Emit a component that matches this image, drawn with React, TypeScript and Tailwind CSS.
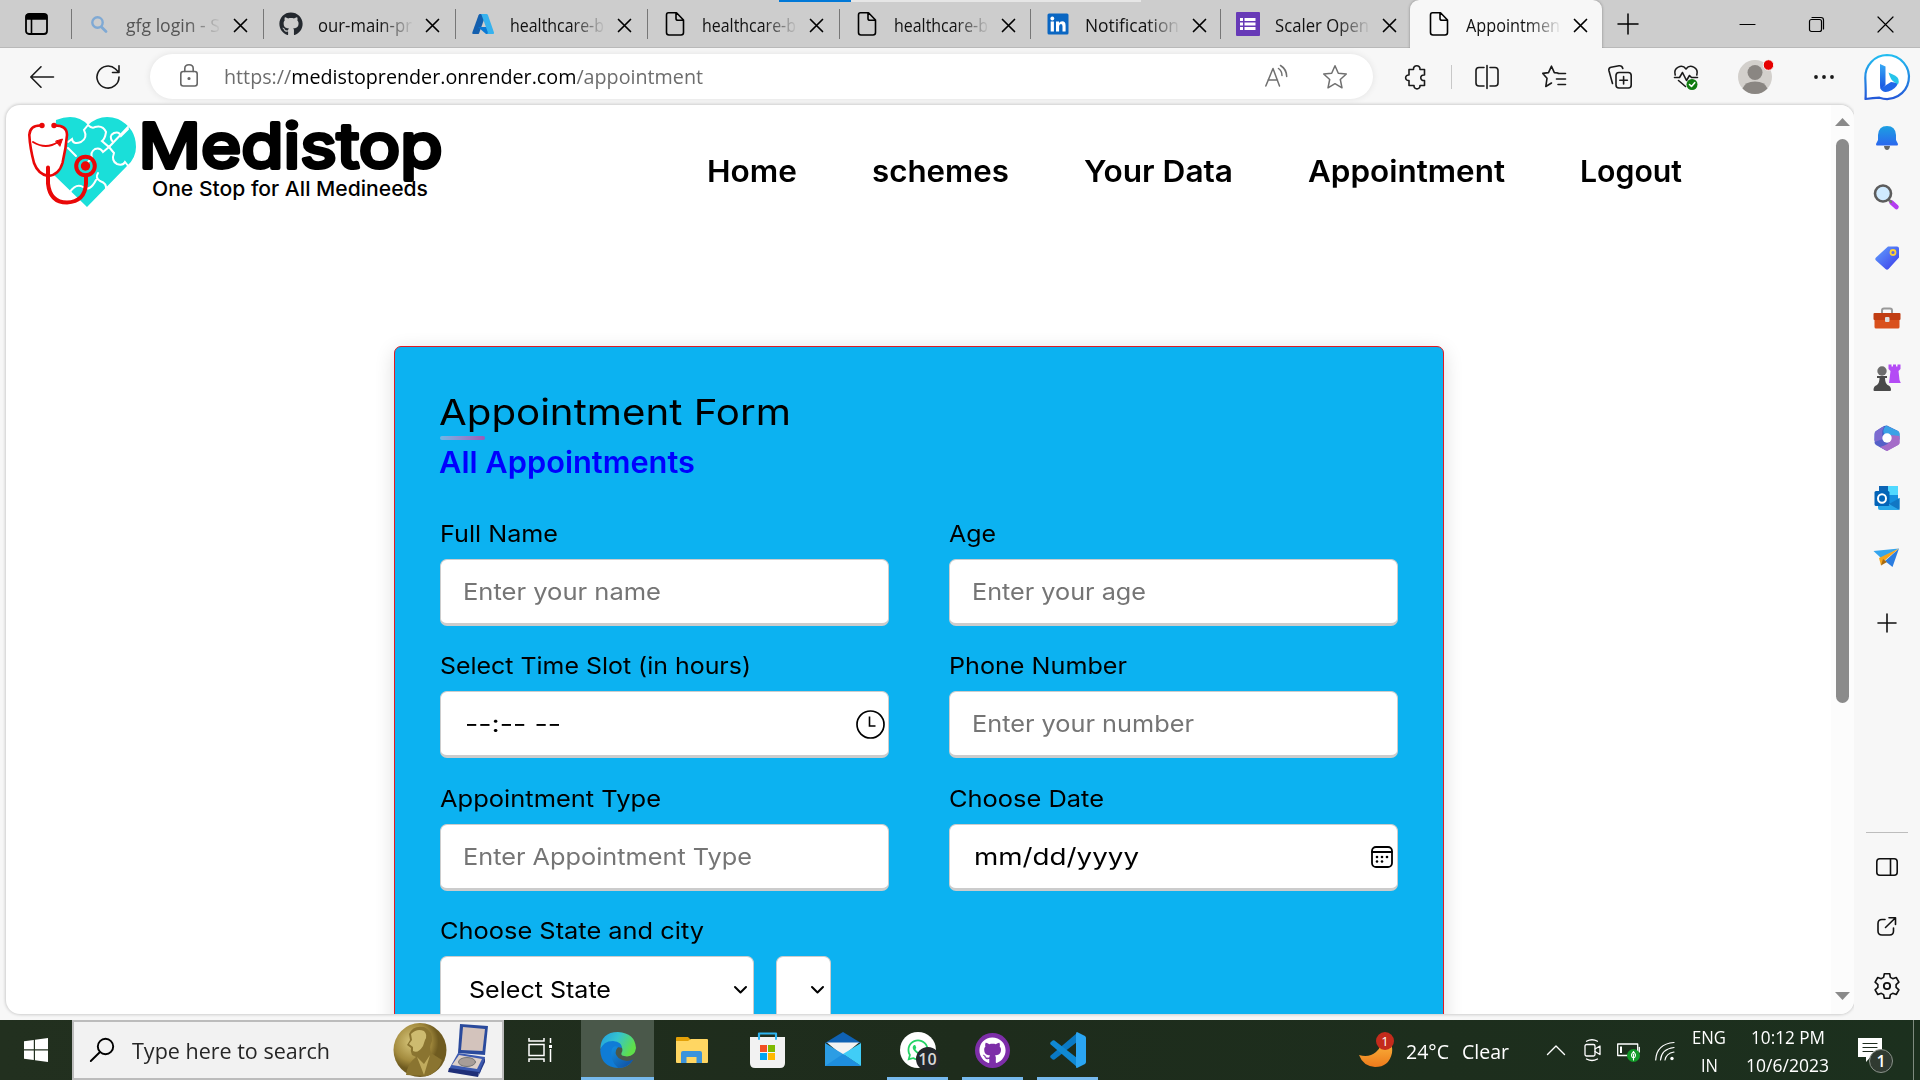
import { useLayoutEffect, useRef, type ReactNode } from "react";
import { FaGithub, FaWhatsapp } from "react-icons/fa";

const ui = "font-['Open_Sans','Noto_Sans',sans-serif]";
const geo = "font-['Inter','Liberation_Sans',sans-serif]";

/* A single line of text set to an exact measure. */
function Fit({ w, className = "", children }: { w: number; className?: string; children: ReactNode }) {
  const ref = useRef<HTMLSpanElement>(null);
  useLayoutEffect(() => {
    const el = ref.current;
    if (el && el.offsetWidth) {
      el.style.transform = `scaleX(${w / el.getBoundingClientRect().width})`;
    }
  }, [w]);
  return (
    <span className={`block shrink-0 whitespace-pre ${className}`} style={{ width: w }}>
      <span ref={ref} className="inline-block origin-left">
        {children}
      </span>
    </span>
  );
}

function Svg({ w, h, className = "", vb, children }: { w: number; h: number; className?: string; vb?: string; children: ReactNode }) {
  return (
    <svg width={w} height={h} viewBox={vb ?? `0 0 ${w} ${h}`} fill="none" stroke="currentColor" strokeWidth="1.6" strokeLinecap="round" strokeLinejoin="round" className={`block shrink-0 overflow-visible ${className}`}>
      {children}
    </svg>
  );
}

/* ---------- tab strip ---------- */

const PageIcon = () => (
  <Svg w={24} h={24}>
    <path d="M5.500 .8 H13.500 L20.500 8 V20.500 Q20.500 23 18 23 H6 Q3.500 23 3.500 20.500 V3 Q3.500 .8 5.500 .8 Z M13 1 V6.500 Q13 8.300 15 8.300 H20.500" />
  </Svg>
);
const SearchFav = () => (
  <Svg w={24} h={24} className="text-[#7fa9d4]">
    <circle cx="10.500" cy="10.500" r="5.200" strokeWidth="2.400" />
    <path d="M14.500 15 L19 19.500" strokeWidth="2.800" />
  </Svg>
);
const AzureIcon = () => (
  <Svg w={24} h={24}>
    <g stroke="none">
      <path d="M9 2 H15 L8 21.500 Q7.600 22 6.500 22 H2.500 Q.8 22 1.300 20.500 L7.500 3.200 Q8 2 9 2Z" fill="#135fae" />
      <path d="M7 15 H17 L18.500 22 H15 Z" fill="#0a78d4" />
      <path d="M9.500 2 H15.500 Q16.600 2 17 3.200 L23 20.500 Q23.300 22 22 22 H16 Q17.300 21.500 16.700 20 L10.700 3.200 Q10.300 2 9.500 2Z" fill="#36b2ee" />
    </g>
  </Svg>
);
const LinkedIn = () => (
  <Svg w={24} h={24}>
    <g stroke="none">
      <rect x="1.500" y="1.500" width="21" height="21" rx="1.500" fill="#0a66c2" />
      <g fill="#fff">
        <circle cx="6.300" cy="6.500" r="1.900" />
        <rect x="4.700" y="9.500" width="3.200" height="10" />
        <path d="M10 9.500 H13 V11 Q14 9.300 16.200 9.300 Q19.600 9.300 19.600 13.500 V19.500 H16.500 V14.300 Q16.500 12 14.900 12 Q13.100 12 13.100 14.500 V19.500 H10Z" />
      </g>
    </g>
  </Svg>
);
const FormsIcon = () => (
  <Svg w={24} h={24}>
    <g stroke="none">
      <rect width="24" height="24" rx="1" fill="#673ab7" />
      <g fill="#fff">
        <rect x="4" y="6" width="3" height="3" /><rect x="8.500" y="6" width="11" height="3" />
        <rect x="4" y="10.500" width="3" height="3" /><rect x="8.500" y="10.500" width="11" height="3" />
        <rect x="4" y="15" width="3" height="3" /><rect x="8.500" y="15" width="11" height="3" />
      </g>
    </g>
  </Svg>
);

const tabs: { icon: ReactNode; text: string; dim?: boolean; w: number }[] = [
  { icon: <SearchFav />, text: "gfg login - S", dim: true, w: 192 },
  { icon: <FaGithub size={24} color="#24292f" />, text: "our-main-pr", w: 192 },
  { icon: <AzureIcon />, text: "healthcare-b", w: 192 },
  { icon: <PageIcon />, text: "healthcare-b", w: 192 },
  { icon: <PageIcon />, text: "healthcare-b", w: 191 },
  { icon: <LinkedIn />, text: "Notification", w: 190 },
  { icon: <FormsIcon />, text: "Scaler Open", w: 190 },
];

const Cross = () => (
  <Svg w={13} h={13}>
    <path d="M.5 .5 L12.500 12.500 M12.500 .5 L.5 12.500" strokeWidth="1.700" />
  </Svg>
);

function TabBody({ icon, text, dim }: { icon: ReactNode; text: string; dim?: boolean }) {
  return (
    <>
      <span className="w-6 shrink-0">{icon}</span>
      <div className="ml-[15px] [mask-image:linear-gradient(to_right,#000_65%,transparent_102%)]">
        <Fit w={94} className={`text-[18.500px] leading-[47px] ${dim ? "text-[#555]" : "text-[#111]"}`}>{text}</Fit>
      </div>
      <span className="ml-[14px] mt-[2px]"><Cross /></span>
    </>
  );
}

function TabStrip() {
  return (
    <div className="relative flex h-12 items-center bg-[#cdcdcd] shadow-[inset_0_-1px_0_#b9b9b9]">
      <div className="ml-[25px] mr-[23px]">
        <Svg w={23} h={22}>
          <rect x="1" y="1" width="21" height="20" rx="3" strokeWidth="1.800" />
          <path d="M1.500 2 H21.500 V6 H1.500Z" fill="#000" />
          <path d="M6.500 6 V21" />
        </Svg>
      </div>
      {tabs.map((t, i) => (
        <div key={i} className="flex h-12 items-center" style={{ width: t.w }}>
          <div className="mr-[15px] h-[30px] w-px shrink-0 bg-[#777]" />
          <TabBody {...t} />
        </div>
      ))}
      <div className="relative z-10 flex h-12 w-[192px] items-center rounded-t-[9px] bg-[#f7f7f7] pl-[17px] shadow-[0_0_3px_rgba(0,0,0,.35)] [clip-path:inset(-4px_-4px_0_-4px)]">
        <TabBody icon={<PageIcon />} text="Appointmen" />
      </div>
      <div className="ml-[16px] flex items-center">
        <Svg w={20} h={20}><path d="M10 0 V20 M0 10 H20" strokeWidth="1.500" /></Svg>
      </div>
      <div className="ml-auto flex items-center pr-[27px]">
        <Svg w={15} h={15}><path d="M0 7.500 H15" strokeWidth="1.200" /></Svg>
        <Svg w={15} h={15} className="ml-[54px]">
          <rect x=".5" y="2.500" width="12" height="12" rx="2" strokeWidth="1.200" />
          <path d="M3 .5 H12 Q14.500 .5 14.500 3 V12" strokeWidth="1.200" />
        </Svg>
        <Svg w={15} h={15} className="ml-[54px]"><path d="M0 0 L15 15 M15 0 L0 15" strokeWidth="1.200" /></Svg>
      </div>
      <div className="absolute left-[779px] top-0 z-20 flex h-[2px] w-[362px] bg-[#e6e6e6]">
        <div className="h-full w-[72px] bg-[#0078d7]" />
      </div>
    </div>
  );
}

/* ---------- address bar ---------- */

function Toolbar() {
  return (
    <div className="flex h-[57px] items-center bg-[#f7f7f7] text-[#1a1a1a]">
      <Svg w={24} h={22} className="ml-[30px]"><path d="M23.500 11 H1 M11 .8 L.8 11 L11 21.200" /></Svg>
      <Svg w={24} h={24} className="ml-[42px]">
        <path d="M23 12 A11 11 0 1 1 19.500 4 L23 7.500 M23 .8 V7.500 H16.500" />
      </Svg>
      <div className="ml-[30px] flex h-[45px] w-[1223px] items-center rounded-full bg-white pl-[30px] shadow-[0_0_7px_rgba(0,0,0,.09)]">
        <Svg w={18} h={23} className="mb-[2px] text-[#666]">
          <rect x=".8" y="7.500" width="16.400" height="14.500" rx="2.500" />
          <path d="M4.800 7.500 V4.500 Q4.800 .8 9 .8 Q13.200 .8 13.200 4.500 V7.500" />
          <circle cx="9" cy="14.500" r=".8" fill="#666" />
        </Svg>
        <Fit w={479} className="ml-[26px] mt-[1px] text-[19.500px] leading-[44px] text-[#6d6d6d]">
          https://<span className="text-black">medistoprender.onrender.com</span>/appointment
        </Fit>
        <Svg w={23} h={22} className="ml-[562px] mb-[2px] text-[#707070]">
          <path d="M.8 21 L8 3.500 L14.500 21 M3 15 H12.500 M13.500 3.500 Q17 6 17 10.500 M15.500 .5 Q21.500 4 21.700 11.500" strokeWidth="1.500" />
        </Svg>
        <Svg w={24} h={24} className="ml-[35px] text-[#707070]">
          <path d="M12 .8 L15.300 8.200 L23.300 9 L17.300 14.500 L19 22.800 L12 18.700 L5 22.800 L6.700 14.500 L.7 9 L8.700 8.200Z" strokeWidth="1.500" />
        </Svg>
      </div>
      <Svg w={23} h={24} className="ml-[32px]">
        <path d="M4 4.500 H8.500 C8 -.5 15.500 -.5 15 4.500 H19.500 V10 C14.500 9.500 14.500 16 19.500 15.500 V20.500 H15 C15.500 25 8.500 25 9 20.500 H4 V15.500 C-.5 16 -.5 9.500 4 10 Z" />
      </Svg>
      <div className="ml-[23px] h-6 w-px bg-[#c8c8c8]" />
      <Svg w={24} h={24} className="ml-[23px]">
        <path d="M9 2.500 H4 Q1 2.500 1 5.500 V18 Q1 21 4 21 H9 M15 2.500 H20 Q23 2.500 23 5.500 V18 Q23 21 20 21 H15 M12 .5 V23.500" />
      </Svg>
      <Svg w={24} h={24} className="ml-[43px]">
        <path d="M16 8 L12.300 7.600 L9.500 1.200 L6.500 7.600 L.8 8.400 L5 13.300 L3.800 21.500 L9.500 18 M16 8.500 H23.500 M14.500 14 H23.500 M16 19.500 H23.500" />
      </Svg>
      <Svg w={24} h={24} className="ml-[42px]">
        <rect x="8" y="7.500" width="15.200" height="15.500" rx="3" />
        <path d="M15.600 11.500 V19 M11.800 15.200 H19.400 M4.500 18.500 L.9 5.500 Q.4 3 3 2.300 L11 .8 Q14 .5 14.800 3.500" />
      </Svg>
      <Svg w={24} h={24} className="ml-[42px]">
        <path d="M1.200 10 C-1 2.500 8 -1.500 12 4 C16 -1.500 25 2.500 22.800 10 M.5 12.500 H5.500 L8.500 7.500 L12.500 15.500 L15.500 10.500 L17.500 12.500 H23.500 M4.500 15.500 L11.500 21.500" />
        <circle cx="18" cy="19.500" r="5.500" fill="#107c10" stroke="none" />
        <path d="M15.500 19.500 L17.500 21.500 L20.700 17.700" stroke="#fff" />
      </Svg>
      <Svg w={34} h={34} className="ml-[40px]">
        <g stroke="none">
          <circle cx="17" cy="17" r="17" fill="#d3d0cc" />
          <circle cx="17" cy="12.500" r="7.500" fill="#8a8682" />
          <path d="M4.500 28.500 Q7 21.500 17 21.500 Q27 21.500 29.500 28.500 Q24 34 17 34 Q10 34 4.500 28.500Z" fill="#8a8682" />
          <circle cx="30.500" cy="5" r="5.300" fill="#e60000" stroke="#f7f7f7" strokeWidth="1" />
        </g>
      </Svg>
      <Svg w={20} h={6} className="ml-[42px]">
        <g fill="#1a1a1a" stroke="none"><circle cx="2" cy="3" r="1.900" /><circle cx="10" cy="3" r="1.900" /><circle cx="18" cy="3" r="1.900" /></g>
      </Svg>
      <Svg w={46} h={46} className="ml-[30px]">
        <defs>
          <linearGradient id="bingRing" x1="0" y1="0" x2="0" y2="1"><stop stopColor="#22bdf0" /><stop offset="1" stopColor="#2458d8" /></linearGradient>
          <linearGradient id="bingB" x1="0" y1="0" x2="0" y2="1"><stop stopColor="#35a9f5" /><stop offset="1" stopColor="#1750e0" /></linearGradient>
        </defs>
        <path d="M23 1 A22 22 0 1 1 15.500 43.700 Q9 44 1.500 45 Q2 40 1.300 24 A22 22 0 0 1 23 1Z" fill="#fff" stroke="url(#bingRing)" strokeWidth="2.200" />
        <path d="M16 10 L21.500 12.500 V31 L17 35.500 Q16 34.500 16 31Z" fill="url(#bingB)" stroke="none" />
        <path d="M16.500 34.500 L27 28 L34 29 Q32 35 24.500 37.500 Q18.500 39 16.500 34.500Z" fill="#1f66e8" stroke="none" />
        <path d="M24.500 18.500 L31 21.500 Q36.500 24.500 34 30.500 L29.500 27.500 Q27 26.500 24.500 18.500Z" fill="#25c4ea" stroke="none" />
      </Svg>
    </div>
  );
}

/* ---------- page ---------- */

function Logo() {
  return (
    <svg width="420" height="100" viewBox="28 110 420 100" className="block shrink-0 overflow-visible" fill="none">
      <path d="M87 207 L53 174 Q45 160 54 148 L56 120 Q76 112 88 125 Q101 113 118 119 Q136 128 136 147 Q136 158 127 166 Z" fill="#1adfd9" />
      <g stroke="#fff" strokeWidth="2" strokeLinecap="round">
        <path d="M88 125 L84 130 Q88 138 81 142 Q73 145 72 139 L68 142 M88 125 Q92 129 95 127 Q103 125 106 132 Q105 139 102 141 L109 147 L128 127" />
        <path d="M109 147 L114 153 Q111 161 117 164 Q123 166 125 162 L129 167 M113 142 Q108 136 114 133 Q119 131 121 136 L128 129" />
        <path d="M109 147 L103 152 Q100 147 95 149 Q90 152 92 158 L86 164 M68 148 L76 156 M98 173 Q95 178 100 181 Q107 183 106 190 L104 196 L108 198 M96 180 Q90 192 83 187 Q76 183 70 192 L66 198" />
      </g>
      <g stroke="#e90808" strokeLinecap="round" strokeLinejoin="round">
        <path d="M41 125.500 Q30 125 29.300 135 Q30 148 34 163 Q38 174 48 176 Q59 175 62.500 163 Q66 148 67 135 Q67 125 54 125.500" fill="#fff" strokeWidth="2.600" />
        <path d="M48 177 V193 Q50 212 67 212 Q85 211 86 193 V185" transform="translate(0 -9.500)" strokeWidth="4" />
        <path d="M33 142 Q46 150 58 142" strokeWidth="2" />
        <path d="M56 141 L62.500 139 L60 146Z" fill="#e90808" strokeWidth="1" />
        <circle cx="85.500" cy="166" r="9.300" strokeWidth="4" />
      </g>
      <g fill="#e90808"><circle cx="42" cy="125.500" r="2.700" /><circle cx="54" cy="125.500" r="2.700" /><circle cx="85.500" cy="166" r="4.700" /></g>
      <text x="138.500" y="167.500" textLength="304" lengthAdjust="spacingAndGlyphs" fontFamily="Inter, sans-serif" fontSize="62.500" fontWeight="400" fill="#000" stroke="#000" strokeWidth="4" strokeLinejoin="round">Medistop</text>
      <text x="152" y="196" textLength="276" lengthAdjust="spacingAndGlyphs" fontFamily="Inter, sans-serif" fontSize="20.500" fontWeight="450" fill="#000">One Stop for All Medineeds</text>
    </svg>
  );
}

const nav: [string, number][] = [["Home", 90], ["schemes", 137], ["Your Data", 149], ["Appointment", 197], ["Logout", 102]];

function Field({ label, lw, children }: { label: string; lw: number; children: ReactNode }) {
  return (
    <div className="h-[132.400px]">
      <Fit w={lw} className="mb-[7px] pt-[1px] text-[23.500px] leading-9 text-black">{label}</Fit>
      {children}
    </div>
  );
}

const box = "flex h-[67px] items-center rounded-[7px] border border-b-[3px] border-[#ccc] bg-white";

function Input({ text, w, dark, icon }: { text: string; w: number; dark?: boolean; icon?: ReactNode }) {
  return (
    <div className={`${box} w-[449px] justify-between pl-[22px] pr-[3px]`}>
      <Fit w={w} className={`pt-[1px] text-[23.500px] leading-9 ${dark ? "ml-[2px] text-black" : "text-[#757575]"}`}>{text}</Fit>
      {icon}
    </div>
  );
}

const Clock = () => (
  <Svg w={29} h={29} className="mt-[2px]"><circle cx="14.500" cy="14.500" r="13.500" strokeWidth="1.700" /><path d="M13.500 6.500 V16 H19.500" strokeLinecap="butt" strokeLinejoin="miter" /></Svg>
);
const Calendar = () => (
  <Svg w={22} h={22} className="mr-[1px] mt-[2px]">
    <rect x="1" y="1" width="20" height="20" rx="4" strokeWidth="1.800" /><path d="M1 6 H21" strokeWidth="1.800" />
    <g fill="#000" stroke="none"><circle cx="6" cy="11" r="1.300" /><circle cx="11" cy="11" r="1.300" /><circle cx="16" cy="11" r="1.300" /><circle cx="6" cy="15.500" r="1.300" /><circle cx="11" cy="15.500" r="1.300" /></g>
  </Svg>
);
const Chevron = () => (
  <Svg w={13} h={8} className="mr-[6px] mt-[3px]"><path d="M1 1 L6.500 6.500 L12 1" strokeWidth="2" /></Svg>
);

function Page() {
  return (
    <div className={`ml-[6px] flex h-[909px] w-[1848px] overflow-hidden rounded-[14px] bg-white shadow-[0_0_3px_1px_rgba(0,0,0,.17)] ${geo}`}>
      <div className="w-[1825px]">
        <header className="flex h-[130px]">
          <div className="ml-[22px] mt-[5px]"><Logo /></div>
          <nav className="ml-[259px] flex gap-[75px] text-[30px] leading-[133px] font-semibold text-black">
            {nav.map(([t, w]) => <Fit key={t} w={w}>{t}</Fit>)}
          </nav>
        </header>
        <form className="ml-[388px] mt-[111px] h-[740px] w-[1050px] rounded-[7px] border border-[#e01b24] bg-[#0cb2f1] pl-[45px] pt-[38px] shadow-[0_5px_20px_rgba(0,0,0,.14)]">
          <div className="relative">
            <Fit w={352} className="-ml-px text-[36px] leading-[54px] text-black">Appointment Form</Fit>
            <div className="absolute bottom-[-1px] left-0 h-1 w-[45px] rounded-full bg-linear-to-r from-[#71b7e6] to-[#9b59b6]" />
          </div>
          <Fit w={256} className="-ml-px mt-[2px] text-[30px] leading-[43px] font-semibold text-[#0000ff]">All Appointments</Fit>
          <div className="mt-[31px] grid grid-cols-[449px_449px] gap-x-[60px]">
            <Field label="Full Name" lw={118}><Input text="Enter your name" w={198} /></Field>
            <Field label="Age" lw={47}><Input text="Enter your age" w={174} /></Field>
            <Field label="Select Time Slot (in hours)" lw={311}><Input text="--:-- --" w={96} dark icon={<Clock />} /></Field>
            <Field label="Phone Number" lw={178}><Input text="Enter your number" w={222} /></Field>
            <Field label="Appointment Type" lw={221}><Input text="Enter Appointment Type" w={289} /></Field>
            <Field label="Choose Date" lw={155}><Input text="mm/dd/yyyy" w={165} dark icon={<Calendar />} /></Field>
            <Field label="Choose State and city" lw={264}>
              <div className="flex gap-[22px]">
                <div className={`${box} w-[314px] justify-between pl-[28px]`}>
                  <Fit w={142} className="pt-[2px] text-[23.500px] leading-9 text-black">Select State</Fit>
                  <Chevron />
                </div>
                <div className={`${box} w-[55px] justify-end`}><Chevron /></div>
              </div>
            </Field>
          </div>
        </form>
      </div>
      <div className="flex flex-1 flex-col items-center bg-[#fcfcfc] pb-[14px] pt-[13px] text-[#8a8a8a]">
        <Svg w={15} h={8}><path d="M0 8 L7.500 0 L15 8Z" fill="#8a8a8a" stroke="none" /></Svg>
        <div className="mt-[13px] h-[564px] w-[13px] rounded-full bg-[#8b8b8b]" />
        <Svg w={15} h={8} className="mt-auto"><path d="M0 0 L7.500 8 L15 0Z" fill="#8a8a8a" stroke="none" /></Svg>
      </div>
    </div>
  );
}

/* ---------- Edge sidebar ---------- */

const apps: ReactNode[] = [
  <g stroke="none">
    <path d="M11 22 H17 Q16.500 26 14 26 Q11.500 26 11 22Z" fill="#666" />
    <path d="M14 2 Q22.500 2 23 11 V16 L25 20 Q25 21.500 24 21.500 H4 Q3 21.500 3 20 L5 16 V11 Q5.500 2 14 2Z" fill="url(#bell)" />
  </g>,
  <g>
    <path d="M18.500 18.500 L23.500 23" stroke="#b43cf0" strokeWidth="4.500" />
    <path d="M15.500 15.500 L18 18" stroke="#777" strokeWidth="2.500" />
    <circle cx="10" cy="9.500" r="8" fill="#cfeaff" stroke="#5c5c5c" strokeWidth="2.600" />
  </g>,
  <g stroke="none">
    <path d="M15 2.500 H24 Q26 2.500 26 4.500 V13.500 L15.500 25 Q14 26.500 12.500 25 L3 16.500 Q1.500 15 3 13.500Z" fill="url(#tag)" />
    <circle cx="20" cy="8.500" r="2.500" fill="#5d68e8" stroke="#ffd233" strokeWidth="1.800" />
  </g>,
  <g stroke="none">
    <path d="M9 10 V6.500 Q9 4.500 11 4.500 H17 Q19 4.500 19 6.500 V10" stroke="#999" strokeWidth="2" fill="none" />
    <rect x="1.500" y="14" width="25" height="10.500" rx="1.500" fill="#d9501c" />
    <rect x=".5" y="9" width="27" height="7" rx="1" fill="#c13d12" />
    <rect x="12" y="13" width="4.500" height="5" rx="1" fill="#ddd" />
  </g>,
  <g stroke="none" transform="translate(0 -1)">
    <circle cx="9" cy="8" r="4.700" fill="#6d6d6d" />
    <path d="M4 13 H14 V15 H12 Q12 20 14.500 22 Q18 23 18 27 Q18 28 17 28 H1.500 Q.5 28 .5 27 Q.5 23 4 22 Q6.500 20 6.500 15 H4Z" fill="#4a4a4a" />
    <path d="M15.500 1.500 H18.500 V3.500 H20 V1.500 H23 V3.500 H24.500 V1.500 H27.500 V6 L25.500 8 L26.500 17 L27.800 20 H16 L17.500 8 L15.500 6Z" fill="#b44bf5" />
  </g>,
  <g stroke="none">
    <path d="M14 1.500 L25 7 Q26.500 8 26.500 10 V15 L18 11 Q14 8 11 12 L9 19 L3 19.500 Q1.500 18 1.500 16 V10 Q1.500 8 3 7 L11 2Z" fill="#4161c9" />
    <path d="M13 1.500 L25 7 Q26.500 8 26.500 10 V16 L18 13 Q17 9 11 10 Q9 6 13 1.500Z" fill="#3aa2e6" />
    <path d="M26.500 12 V19 Q26.500 20 25 21 L14 27 L5 21.500 Q12 22 18 16 V11Z" fill="#a56cc8" />
    <path d="M2 8 Q10 2 11 3 Q8 8 10 14 Q12 18 7 20 Q2 20 1.500 16Z" fill="#7d6bd0" />
    <path d="M1.500 18 L10 15 L16 19 L13 26.500 L3 21 Q1.500 20 1.500 18Z" fill="#5560c8" />
    <path d="M26.500 14 V19 Q26.500 20 25 21 L14 27 L7 23 Q15 21 18.500 16Z" fill="#a56cc8" />
    <circle cx="14" cy="14" r="4.700" fill="#fff" />
  </g>,
  <g stroke="none">
    <rect x="6" y="2" width="19" height="18" rx="1" fill="#1490df" />
    <rect x="15" y="2" width="10" height="9" fill="#50d9ff" /><rect x="6" y="2" width="9" height="5" fill="#0c64b5" />
    <path d="M5 17 L16 21 L26.500 14 V24 Q26.500 26 25 26 H7 Q5 26 5 24Z" fill="#28a8ea" /><path d="M16 20 L26.500 14 V26Z" fill="#1177c4" />
    <rect x="1.500" y="7" width="15" height="15" rx="1.500" fill="#0364b8" />
    <ellipse cx="9" cy="14.500" rx="4" ry="4.300" stroke="#fff" strokeWidth="2" />
  </g>,
  <g stroke="none">
    <path d="M.5 7 L26 4.500 L8 14Z" fill="#35a5ee" /><path d="M26 4.500 L19.500 23 L12 17Z" fill="#2b7de0" />
    <path d="M26 4.500 L6 14 L8 21.500 L11 17Z" fill="#f5a51c" /><path d="M8 21.500 L10 15 L14 18Z" fill="#a96c12" />
  </g>,
];

function Sidebar() {
  return (
    <div className="flex flex-1 flex-col items-center bg-[#f7f7f7] pr-px text-[#111]">
      <svg width="0" height="0" className="absolute">
        <defs>
          <linearGradient id="bell" x1="0" y1="0" x2="0" y2="1"><stop stopColor="#1ca0e2" /><stop offset="1" stopColor="#2b67ee" /></linearGradient>
          <linearGradient id="tag" x1="0" y1="0" x2="1" y2="1"><stop stopColor="#62a3ff" /><stop offset="1" stopColor="#3a38e8" /></linearGradient>
        </defs>
      </svg>
      <div className="mt-[19px] flex flex-col gap-8">
        {apps.map((a, i) => <Svg key={i} w={28} h={28}>{a}</Svg>)}
      </div>
      <Svg w={18} h={18} className="mt-[42px]"><path d="M9 0 V18 M0 9 H18" /></Svg>
      <div className="mt-[200px] h-px w-[42px] bg-[#bdbdbd]" />
      <Svg w={22} h={18} className="mt-[25px]"><rect x=".8" y=".8" width="20.400" height="16.400" rx="3" /><path d="M14.500 1 V17" /></Svg>
      <Svg w={20} h={19} className="mt-[41px]"><path d="M8 2.500 H5 Q1 2.500 1 6.500 V14 Q1 18 5 18 H12.500 Q16.500 18 16.500 14 V11 M12 .8 H18.500 V7.500 M18 1.300 L8.500 10.500" /></Svg>
      <Svg w={28} h={28} vb="0 0 24 24" className="mt-[36px]">
        <path strokeWidth="1.400" d="M9.700 1.500 h4.600 l.6 3.100 2 1.100 3-1 2.300 4 -2.400 2.100 v2.400 l2.400 2.100 -2.300 4 -3-1 -2 1.100 -.6 3.100 h-4.600 l-.6-3.100 -2-1.100 -3 1 -2.300-4 2.400-2.100 v-2.400 l-2.400-2.100 2.300-4 3 1 2-1.100z" /><circle cx="12" cy="12" r="2.700" />
      </Svg>
    </div>
  );
}

/* ---------- Windows taskbar ---------- */

function Edge() {
  return (
    <Svg w={36} h={36}>
      <defs>
        <linearGradient id="eg" x1="0" y1="0" x2="1" y2=".4"><stop stopColor="#1f9be0" /><stop offset=".5" stopColor="#35c4cf" /><stop offset="1" stopColor="#5fe04a" /></linearGradient>
        <linearGradient id="eb" x1="0" y1="0" x2="1" y2="1"><stop stopColor="#128fe0" /><stop offset="1" stopColor="#114a9c" /></linearGradient>
      </defs>
      <g stroke="none">
        <path d="M.3 17 Q1 0 18 0 Q35 1 36 16 Q35 24 27 24.500 Q20 24 21.500 21 Q24 17 20 13 Q9 6 .3 17Z" fill="url(#eg)" />
        <path d="M.2 18 Q3 9 13 9 Q22 10 22 16 Q15 13 14 21 Q15 30 25 31 Q30 31 33 28 Q28 36 18 36 Q1 35 .2 18Z" fill="#0f7cd6" />
        <path d="M12 17 Q9 28 18 36 Q28 36 33.500 27.500 Q25 31 18.500 26 Q13 21 18 15 Q14 13 12 17Z" fill="url(#eb)" />
      </g>
    </Svg>
  );
}

function TaskApp({ children, active, open }: { children: ReactNode; active?: boolean; open?: boolean }) {
  return (
    <div className={`flex h-[60px] flex-col items-center ${active ? "mr-px w-[73px] bg-[#4a584a]" : "w-[75px]"}`}>
      <div className="flex h-[57px] items-center pt-[3px]">{children}</div>
      <div className={`h-[3px] ${active ? "w-full" : "w-[61px]"} ${active || open ? "bg-[#76b9ed]" : ""}`} />
    </div>
  );
}

function Medals() {
  return (
    <Svg w={96} h={56}>
      <defs><radialGradient id="gold" cx=".35" cy=".35"><stop stopColor="#d8c77c" /><stop offset=".7" stopColor="#a38b3e" /><stop offset="1" stopColor="#6f5b20" /></radialGradient></defs>
      <g stroke="none">
        <ellipse cx="27" cy="28" rx="26.500" ry="27" fill="url(#gold)" />
        <path d="M16 12 Q20 3 31 5 Q40 9 39 19 Q36 25 38 31 L49 38 Q46 50 34 54 L13 53 Q14 42 23 35 L19 33 Q17 29 18 26 L14 23 L17 18Z" fill="#8a7430" />
        <path d="M18 12 Q24 6 31 9 Q35 13 32 18 L30 24 Q25 32 20 29 L20 25 L16 22 L19 18Z" fill="#cdbb70" />
        <path d="M24 35 L31 42 L37 33 L31 53 Z" fill="#c0ab5e" />
        <path d="M67 2 L95 4 L92 33 L65 31Z" fill="#2a4a9c" /><path d="M70 5 L92 7 L89.500 29 L68 28Z" fill="#d3c3bc" />
        <path d="M65 31 L92 35 L87 51 L56 47Z" fill="#3c5ab0" /><path d="M66 33 L89 37 L84 47 L59 43Z" fill="#ddd0c8" />
        <path d="M56 46 L86 50 L85 55 L55 50Z" fill="#1f2f78" /><path d="M92 35 L86 51 L85 55 L92 40Z" fill="#24398a" />
        <ellipse cx="74" cy="40" rx="8.500" ry="4.500" fill="#a79d98" stroke="#777" strokeWidth="1" />
      </g>
    </Svg>
  );
}

function Taskbar() {
  return (
    <div className="flex h-[60px] items-center bg-linear-to-r from-[#22301f] via-[#1e2c1c] to-[#1c301e] text-white">
      <Svg w={24} h={24} className="ml-6">
        <path d="M0 3.300 L9.800 2 V11.300 H0Z M11 1.800 L24 0 V11.300 H11Z M0 12.600 H9.800 V22 L0 20.700Z M11 12.600 H24 V24 L11 22.200Z" fill="#fff" stroke="none" />
      </Svg>
      <div className="ml-6 flex h-[60px] w-[432px] items-center border-2 border-[#bcbcbc] bg-[#f2f2f2] text-black">
        <Svg w={24} h={24} className="ml-4"><circle cx="15.500" cy="8.500" r="7.700" strokeWidth="1.900" /><path d="M10 14 L.8 23" strokeWidth="1.900" /></Svg>
        <Fit w={198} className="ml-[18px] mt-[2px] text-[21.500px] leading-[54px] text-[#262626]">Type here to search</Fit>
        <div className="ml-[63px]"><Medals /></div>
      </div>
      <Svg w={25} h={24} className="ml-[24px]">
        <g strokeWidth="1.500" strokeLinecap="butt" strokeLinejoin="miter"><rect x="1" y="6.500" width="15" height="11" /><path d="M1 0 V3 H16 V0 M1 24 V21 H16 V24 M22.500 0 V5 M22.500 11 V24" /></g>
        <rect x="21" y="7" width="3" height="3" fill="#fff" stroke="none" />
      </Svg>
      <div className="ml-[28px] flex">
        <TaskApp active><Edge /></TaskApp>
        <TaskApp>
          <Svg w={32} h={30} className="-ml-[1px]"><g stroke="none"><path d="M0 3 Q0 2 1 2 H12 L15 5 L12 9 H0Z" fill="#e3a008" /><path d="M0 6 H12 L15 4 H31 Q32 4 32 5 V27 Q32 28 31 28 H1 Q0 28 0 27Z" fill="#ffd662" /><path d="M5 28 V18 Q5 16 7 16 H24 Q26 16 26 18 V28 H20.500 V22 H10.500 V28Z" fill="#3a93dc" /></g></Svg>
        </TaskApp>
        <TaskApp>
          <Svg w={35} h={36}><path d="M9 9 V1.500 H26 V9" stroke="#2db4f0" strokeWidth="2.200" /><g stroke="none"><path d="M0 5 H35 V31 Q35 36 30 36 H5 Q0 36 0 31Z" fill="#f2f2f2" /><path d="M9 5 V7 M26 5 V7" stroke="#2db4f0" strokeWidth="2" /><path d="M10 13 h7 v7 h-7Z" fill="#f25022" /><path d="M18 13 h7 v7 h-7Z" fill="#7fba00" /><path d="M10 21 h7 v7 h-7Z" fill="#00a4ef" /><path d="M18 21 h7 v7 h-7Z" fill="#ffb900" /></g></Svg>
        </TaskApp>
        <TaskApp>
          <Svg w={36} h={34} className="-mt-[2px]"><g stroke="none"><path d="M0 11 L18 0 L36 11Z" fill="#0f62b4" /><path d="M2 10.500 H34 L18 24Z" fill="#f3f3f3" /><path d="M0 11 L18 22 L36 34 H0Z" fill="#2c9de4" /><path d="M36 11 L18 22 L36 34Z" fill="#40cdf7" /><path d="M0 34 L18 22 L36 34Z" fill="#1e8ede" /></g></Svg>
        </TaskApp>
        <TaskApp open>
          <div className="relative grid size-9 place-items-center rounded-full bg-white">
            <FaWhatsapp size={24} color="#25d366" />
            <span className="absolute -bottom-[3px] -right-[4px] grid size-6 place-items-center rounded-full bg-[#23272b] text-[16px] leading-none font-semibold text-[#d8d8d8]">10</span>
          </div>
        </TaskApp>
        <TaskApp open>
          <div className="grid size-[35px] place-items-center rounded-full bg-[#7d2ea8]"><FaGithub size={27} color="#fff" /></div>
        </TaskApp>
        <TaskApp open>
          <Svg w={36} h={36}><g stroke="none"><path d="M27 1 V10 L4.500 27.500 Q3 28 2 27 L.5 25.500 Q-.3 24.500 .7 23.500Z" fill="#0a79c4" /><path d="M27 35 V26 L4.500 8.500 Q3 8 2 9 L.5 10.500 Q-.3 11.500 .7 12.500Z" fill="#1089d4" /><path d="M27 0 L35 4 Q36 5 36 6 V30 Q36 31 35 32 L27 36 Q25.500 36 26 34 V2 Q26 0 27 0Z" fill="#2aa5f2" /></g></Svg>
        </TaskApp>
      </div>
      <div className="relative ml-[254px]">
        <Svg w={34} h={34}>
          <defs><linearGradient id="moon" x1="0" y1="0" x2="0" y2="1"><stop stopColor="#fbc043" /><stop offset="1" stopColor="#ee7a1b" /></linearGradient></defs>
          <path d="M22 4 Q35 9 33 20 Q30 34 16 34 Q4 33 0 22 Q10 25 17 19 Q24 13 22 4Z" fill="url(#moon)" stroke="none" />
        </Svg>
        <span className="absolute -top-[1px] left-[17px] grid size-[18px] place-items-center rounded-full bg-[#c42b1c] text-[13px] leading-none">1</span>
      </div>
      <div className="ml-[13px] mt-[2px] flex gap-[13px] text-[20.500px] leading-[58px]">
        <Fit w={43}>24°C</Fit>
        <Fit w={47}>Clear</Fit>
      </div>
      <Svg w={18} h={10} className="ml-[38px]"><path d="M.5 9.500 L9 1 L17.500 9.500" strokeWidth="1.400" /></Svg>
      <Svg w={17} h={22} className="ml-[19px]"><g strokeWidth="1.300"><rect x="1" y="5.500" width="10" height="11.500" rx="1.500" /><path d="M11 10 L16 7 V15.500 L11 12.500 M2.500 2.300 Q8 -.8 13.500 2.300 M2.500 20 Q8 23 13.500 20" /></g></Svg>
      <Svg w={23} h={20} className="ml-[16px] mt-[4px]"><g strokeWidth="1.300"><rect x=".7" y="2" width="20" height="11.500" /><path d="M22.300 5.500 V10" /><rect x="3" y="4.500" width="2" height="6.500" fill="#fff" stroke="none" /></g><circle cx="16.500" cy="13.500" r="6.500" fill="#129a28" stroke="none" /><path d="M16.500 9.500 Q20.500 14 16.500 16 Q12.500 14 16.500 9.500 M16.500 12 V18" strokeWidth="1.100" /></Svg>
      <Svg w={20} h={20} className="ml-[15px] mt-[2px]"><g strokeWidth="1.200"><path d="M.7 19 Q1.500 3 19 1.500 M5.500 19 Q6.500 8 19 6.500 M10 19 Q11 12.500 19 11" /></g><circle cx="17" cy="17.500" r="1.700" fill="#fff" stroke="none" /></Svg>
      <div className="ml-[17px] mt-[2px] flex w-[34px] flex-col items-center text-[17.500px] leading-[28px]">
        <Fit w={34}>ENG</Fit>
        <Fit w={17}>IN</Fit>
      </div>
      <div className="ml-[20px] mt-[1px] flex w-[83px] flex-col items-center text-[17.500px] leading-[28px]">
        <Fit w={74}>10:12 PM</Fit>
        <Fit w={83}>10/6/2023</Fit>
      </div>
      <div className="relative ml-[29px]">
        <Svg w={24} h={24}><path d="M0 0 H24 V19 H12.500 L8 24 V19 H0Z" fill="#fff" stroke="none" /><path d="M5 5.500 H19 M5 9.500 H19 M5 13.500 H15" stroke="#1e2c1e" strokeWidth="1.200" /></Svg>
        <span className="absolute left-[11px] top-[11px] grid size-6 place-items-center rounded-full border border-[#8a928a] bg-[#303a31] text-[16px] font-semibold leading-none">1</span>
      </div>
      <div className="ml-auto mr-[6px] h-full w-px bg-[#7e8a7e]" />
    </div>
  );
}

export default function App() {
  return (
    <div className={`flex h-[1080px] w-[1920px] flex-col overflow-hidden bg-[#f7f7f7] text-black ${ui}`}>
      <TabStrip />
      <Toolbar />
      <div className="flex h-[915px]">
        <Page />
        <Sidebar />
      </div>
      <Taskbar />
    </div>
  );
}
